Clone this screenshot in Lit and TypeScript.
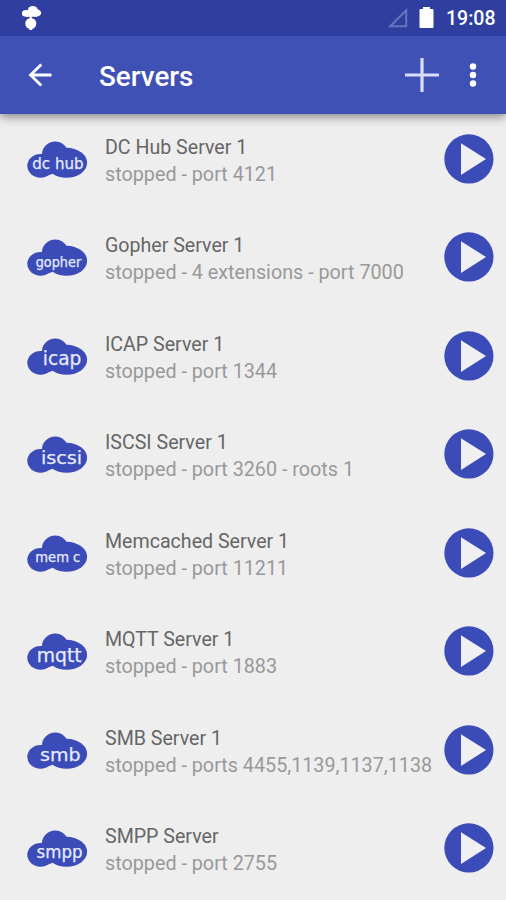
import { LitElement, html, css, svg } from "lit";
import { customElement, property } from "lit/decorators.js";

interface Server {
  name: string;
  detail: string;
  label: string;
  x: number;
  width: number;
  baseline: number;
  size: number;
}

const SERVERS: Server[] = [
  { name: "DC Hub Server 1", detail: "stopped - port 4121", label: "dc hub", x: 5.3, width: 51.3, baseline: 28.4, size: 16 },
  { name: "Gopher Server 1", detail: "stopped - 4 extensions - port 7000", label: "gopher", x: 8.7, width: 45.5, baseline: 27.5, size: 13.4 },
  { name: "ICAP Server 1", detail: "stopped - port 1344", label: "icap", x: 15.8, width: 38.5, baseline: 27, size: 19 },
  { name: "ISCSI Server 1", detail: "stopped - port 3260 - roots 1", label: "iscsi", x: 14, width: 41.2, baseline: 28.2, size: 18.5 },
  { name: "Memcached Server 1", detail: "stopped - port 11211", label: "mem c", x: 8.3, width: 45, baseline: 27.2, size: 13.4 },
  { name: "MQTT Server 1", detail: "stopped - port 1883", label: "mqtt", x: 9.7, width: 45, baseline: 29.2, size: 19 },
  { name: "SMB Server 1", detail: "stopped - ports 4455,1139,1137,1138", label: "smb", x: 13, width: 40.5, baseline: 28.6, size: 18.5 },
  { name: "SMPP Server", detail: "stopped - port 2755", label: "smpp", x: 9.6, width: 46, baseline: 28, size: 17 },
];

@customElement("server-row")
class ServerRow extends LitElement {
  @property({ attribute: false }) server!: Server;

  static styles = css`
    :host { display: flex; height: 98.43px; box-sizing: border-box; padding: 20px 12px 0 27px; align-items: flex-start; }
    .cloud { width: 61px; height: 38px; margin-top: 7px; flex: none; overflow: visible; }
    .cloud text { font-family: "DejaVu Sans", Verdana, sans-serif; fill: #e6ebff; stroke: #e6ebff; stroke-width: 0.25; }
    .shape { fill: #3b4bb8; }
    .copy { flex: 1; min-width: 0; margin-left: 17px; white-space: nowrap; line-height: 27px; }
    .name { color: #666; font-size: 19.6px; }
    .detail { color: #999; font-size: 19.75px; }
    .play { width: 50px; height: 50px; flex: none; }
  `;

  render() {
    const s = this.server;
    return html`
      <svg class="cloud" viewBox="0 0 61 38">
        <g class="shape">
          <ellipse cx="13.6" cy="24.8" rx="13.3" ry="11.9" />
          <ellipse cx="28.2" cy="14.2" rx="13.4" ry="13.6" />
          <ellipse cx="39.6" cy="21.8" rx="20.5" ry="15" />
          <path d="M13 13h17v16l-6 4.5-8 1Z" />
        </g>
        ${svg`<text x=${s.x} y=${s.baseline} font-size=${s.size} textLength=${s.width} lengthAdjust="spacingAndGlyphs">${s.label}</text>`}
      </svg>
      <div class="copy">
        <div class="name">${s.name}</div>
        <div class="detail">${s.detail}</div>
      </div>
      <svg class="play" viewBox="0 0 50 50">
        <circle class="shape" cx="24.9" cy="24.9" r="24.6" />
        <path d="M17 9.3 42 25 17 41Z" fill="#f0f0f2" />
      </svg>
    `;
  }
}

@customElement("app-root")
class AppRoot extends LitElement {
  static styles = css`
    :host { display: flex; flex-direction: column; height: 900px; overflow: hidden; background: #eee; font-family: Roboto, sans-serif; }
    .status { height: 35.5px; flex: none; background: #303f9f; display: flex; align-items: center; padding: 0 10.5px 0 21px; color: #fff; z-index: 2; }
    .status .gap, .bar .gap { flex: 1; }
    .notice { width: 21px; height: 26px; }
    .signal { width: 20px; height: 20px; margin-right: 11px; }
    .battery { width: 15px; height: 22px; margin-right: 12.5px; }
    .time { font-size: 19.5px; font-weight: 500; line-height: 36px; margin-top: 3px; }
    .bar { height: 78.5px; flex: none; background: #3f51b5; display: flex; align-items: center; padding: 0 29px 0 28px; color: #fff; box-shadow: 0 2px 10px rgba(0, 0, 0, 0.5); z-index: 1; }
    .back { width: 24px; height: 24px; }
    .title { font-size: 27.8px; font-weight: 500; line-height: 36px; margin: 5px 0 0 47px; }
    .add { width: 34px; height: 34px; }
    .more { width: 8px; height: 26px; margin-left: 30px; }
    .list { flex: 1; min-height: 0; overflow: hidden; }
  `;

  render() {
    return html`
      <div class="status">
        <svg class="notice" viewBox="0 0 21 26" fill="#fff">
          <ellipse cx="5.3" cy="8.4" rx="4.4" ry="3.3" />
          <ellipse cx="11.8" cy="5.6" rx="5" ry="4.6" />
          <ellipse cx="15.5" cy="8" rx="4.7" ry="3.7" />
          <path d="M5 7h11v4.7H5zM8.7 11h2v4h-2z" />
          <circle cx="9.8" cy="18.5" r="5.5" />
          <path d="M8.3 22h3v3h-3z" />
        </svg>
        <span class="gap"></span>
        <svg class="signal" viewBox="0 0 20 20"><path d="M2.3 18.2H18.2V2.3Z" fill="none" stroke="#6673bd" stroke-width="2" /></svg>
        <svg class="battery" viewBox="0 0 15 22"><path d="M4 0h7v2h2.3q1.2 0 1.2 1.2v16.6q0 1.2-1.2 1.2H1.7Q.5 21 .5 19.8V3.2Q.5 2 1.7 2H4Z" fill="#fff" /></svg>
        <span class="time">19:08</span>
      </div>
      <div class="bar">
        <svg class="back" viewBox="0 0 24 24"><path d="M23.5 12H2.5M13.3 1.5 2.5 12l10.8 10.5" fill="none" stroke="#fff" stroke-width="2.8" /></svg>
        <span class="title">Servers</span>
        <span class="gap"></span>
        <svg class="add" viewBox="0 0 34 34"><path d="M17 0v34M0 17h34" stroke="#d9def8" stroke-width="3.2" /></svg>
        <svg class="more" viewBox="0 0 8 26" fill="#fff"><circle cx="4" cy="4.5" r="3.2" /><circle cx="4" cy="13" r="3.2" /><circle cx="4" cy="21.5" r="3.2" /></svg>
      </div>
      <div class="list">${SERVERS.map((s) => html`<server-row .server=${s}></server-row>`)}</div>
    `;
  }
}
